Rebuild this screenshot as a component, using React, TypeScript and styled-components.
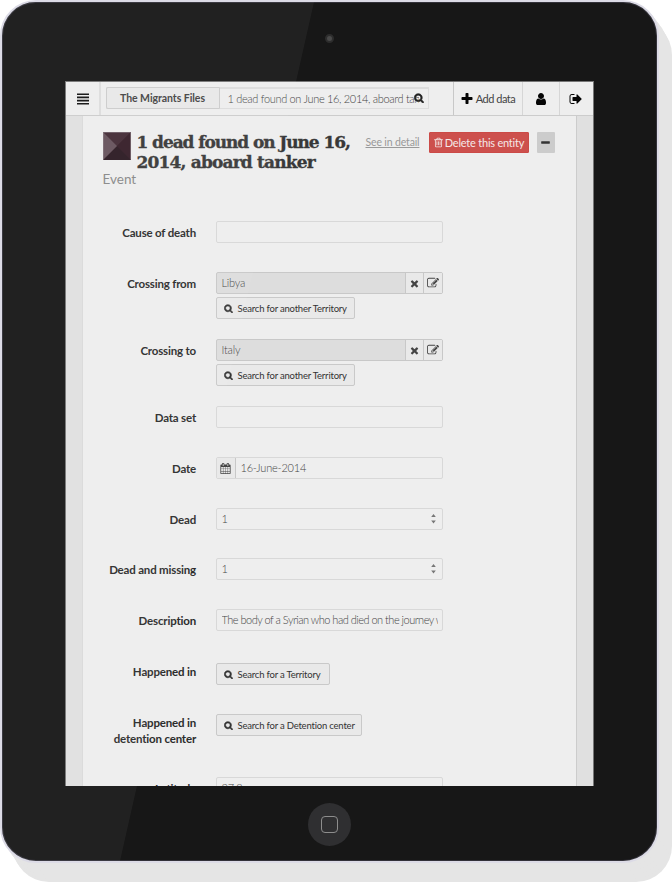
import React from 'react';
import styled, { createGlobalStyle } from 'styled-components';

const GlobalStyle = createGlobalStyle`
  * { box-sizing: border-box; }
  body { margin: 0; background: #fff; font-family: Lato, "Liberation Sans", sans-serif; color: #333; }
  button, input { font-family: inherit; margin: 0; }
`;

const paths = {
  search: 'M1216 832q0-185-131.5-316.5t-316.5-131.5-316.5 131.5-131.5 316.5 131.5 316.5 316.5 131.5 316.5-131.5 131.5-316.5zm512 832q0 52-38 90t-90 38q-54 0-90-38l-343-342q-179 124-399 124-143 0-273.5-55.5t-225-150-150-225-55.5-273.5 55.5-273.5 150-225 225-150 273.5-55.5 273.5 55.5 225 150 150 225 55.5 273.5q0 220-124 399l343 343q37 37 37 90z',
  user: 'M1536 1399q0 109-62.5 187t-150.5 78h-854q-88 0-150.5-78t-62.5-187q0-85 8.5-160.5t31.5-152 58.5-131 94-89 134.5-34.5q131 128 313 128t313-128q76 0 134.5 34.5t94 89 58.5 131 31.5 152 8.5 160.5zm-256-887q0 159-112.5 271.5t-271.5 112.5-271.5-112.5-112.5-271.5 112.5-271.5 271.5-112.5 271.5 112.5 112.5 271.5z',
  plus: 'M1600 736v192q0 40-28 68t-68 28h-416v416q0 40-28 68t-68 28h-192q-40 0-68-28t-28-68v-416h-416q-40 0-68-28t-28-68v-192q0-40 28-68t68-28h416v-416q0-40 28-68t68-28h192q40 0 68 28t28 68v416h416q40 0 68 28t28 68z',
  signOut: 'M704 1440q0 4 1 20t.5 26.5-3 23.5-10 19.5-20.5 6.5h-320q-119 0-203.5-84.5t-84.5-203.5v-704q0-119 84.5-203.5t203.5-84.5h320q13 0 22.5 9.5t9.5 22.5q0 4 1 20t.5 26.5-3 23.5-10 19.5-20.5 6.5h-320q-66 0-113 47t-47 113v704q0 66 47 113t113 47h312l11.5 1 11.5 3 8 5.5 7 9 2 13.5zm928-544q0 26-19 45l-544 544q-19 19-45 19t-45-19-19-45v-288h-448q-26 0-45-19t-19-45v-384q0-26 19-45t45-19h448v-288q0-26 19-45t45-19 45 19l544 544q19 19 19 45z',
  edit: 'M888 1184l116-116-152-152-116 116v56h96v96h56zm440-720q-16-16-33 1l-350 350q-17 17-1 33t33-1l350-350q17-17 1-33zm80 594v190q0 119-84.5 203.5t-203.5 84.5h-832q-119 0-203.5-84.5t-84.5-203.5v-832q0-119 84.5-203.5t203.5-84.5h832q63 0 117 25 15 7 18 23 3 17-9 29l-49 49q-14 14-32 8-23-6-45-6h-832q-66 0-113 47t-47 113v832q0 66 47 113t113 47h832q66 0 113-47t47-113v-126q0-13 9-22l64-64q15-15 35-7t20 29zm-96-738l288 288-672 672h-288v-288zm444 132l-92 92-288-288 92-92q28-28 68-28t68 28l152 152q28 28 28 68t-28 68z',
  times: 'M1490 1322q0 40-28 68l-136 136q-28 28-68 28t-68-28l-294-294-294 294q-28 28-68 28t-68-28l-136-136q-28-28-28-68t28-68l294-294-294-294q-28-28-28-68t28-68l136-136q28-28 68-28t68 28l294 294 294-294q28-28 68-28t68 28l136 136q28 28 28 68t-28 68l-294 294 294 294q28 28 28 68z',
  calendar: 'M192 1664h288v-288h-288v288zm352 0h320v-288h-320v288zm-352-352h288v-320h-288v320zm352 0h320v-320h-320v320zm-352-384h288v-288h-288v288zm736 736h320v-288h-320v288zm-384-736h320v-288h-320v288zm768 736h288v-288h-288v288zm-384-352h320v-320h-320v320zm-352-864v-288q0-13-9.5-22.5t-22.5-9.5h-64q-13 0-22.5 9.5t-9.5 22.5v288q0 13 9.5 22.5t22.5 9.5h64q13 0 22.5-9.5t9.5-22.5zm736 864h288v-320h-288v320zm-384-384h320v-288h-320v288zm384 0h288v-288h-288v288zm32-480v-288q0-13-9.5-22.5t-22.5-9.5h-64q-13 0-22.5 9.5t-9.5 22.5v288q0 13 9.5 22.5t22.5 9.5h64q13 0 22.5-9.5t9.5-22.5zm384-64v1280q0 52-38 90t-90 38h-1408q-52 0-90-38t-38-90v-1280q0-52 38-90t90-38h128v-96q0-66 47-113t113-47h64q66 0 113 47t47 113v96h384v-96q0-66 47-113t113-47h64q66 0 113 47t47 113v96h128q52 0 90 38t38 90z',
  trash: 'M704 736v576q0 14-9 23t-23 9h-64q-14 0-23-9t-9-23v-576q0-14 9-23t23-9h64q14 0 23 9t9 23zm256 0v576q0 14-9 23t-23 9h-64q-14 0-23-9t-9-23v-576q0-14 9-23t23-9h64q14 0 23 9t9 23zm256 0v576q0 14-9 23t-23 9h-64q-14 0-23-9t-9-23v-576q0-14 9-23t23-9h64q14 0 23 9t9 23zm128 724v-948h-896v948q0 22 7 40.5t14.5 27 10.5 8.5h832q3 0 10.5-8.5t14.5-27 7-40.5zm-672-1076h448l-48-117q-7-9-17-11h-317q-10 2-17 11zm928 32v64q0 14-9 23t-23 9h-96v948q0 83-47 143.5t-113 60.5h-832q-66 0-113-58.5t-47-141.5v-952h-96q-14 0-23-9t-9-23v-64q0-14 9-23t23-9h309l70-167q15-37 54-63t79-26h320q40 0 79 26t54 63l70 167h309q14 0 23 9t9 23z',
  bars: 'M0 60h1792v250H0zM0 535h1792v250H0zM0 1010h1792v250H0zM0 1485h1792v250H0z',
  minus: 'M256 700h1280q64 0 64 64v264q0 64-64 64H256q-64 0-64-64V764q0-64 64-64z',
};

function Icon({ name, size }: { name: keyof typeof paths; size: number }) {
  const bold = name === 'search' ? 130 : 0;
  return (
    <svg width={size} height={size} viewBox="0 0 1792 1792" fill="currentColor" stroke="currentColor" strokeWidth={bold} aria-hidden="true">
      <path d={paths[name]} />
    </svg>
  );
}

const Stage = styled.main`
  width: 672px;
  height: 882px;
  overflow: hidden;
`;

const Tablet = styled.div`
  position: relative;
  width: 659px;
  height: 863px;
  border: 2px solid #dcdbe6;
  border-radius: 36px;
  background: #171717;
  display: grid;
  grid-template-rows: 79px 705px 1fr;
  justify-items: center;
  box-shadow: inset 0 0 0 1px #33323a, 3px 4px #e5e5e5, 6px 8px #e5e5e5, 9px 12px #e5e5e5,
    11px 16px #e5e5e5, 13px 19px #e5e5e5;
`;

const Gloss = styled.div`
  position: absolute;
  inset: 0;
  border-radius: 34px;
  background: rgba(255, 255, 255, 0.048);
  clip-path: polygon(0 0, 312px 0, 118px 100%, 0 100%);
  pointer-events: none;
`;

const Camera = styled.div`
  width: 9px;
  height: 9px;
  margin-top: 32px;
  border: 2px solid #2d2d2d;
  border-radius: 50%;
  background: #4a4a4a;
`;

const HomeButton = styled.div`
  width: 43px;
  height: 43px;
  margin-top: 17px;
  border-radius: 50%;
  background: #2f2f31;
  display: grid;
  place-items: center;
  &::after {
    content: '';
    width: 15px;
    height: 15px;
    border: 1px solid #8d8d8d;
    border-radius: 4px;
  }
`;

const Screen = styled.div`
  width: 529px;
  height: 705px;
  margin-right: 1px;
  overflow: hidden;
  background: #e0e0e0;
  border: solid #777;
  border-width: 1px 1px 0;
  display: flex;
  flex-direction: column;
`;

const TopBar = styled.header`
  height: 34px;
  flex: none;
  display: flex;
  background: #eee;
  border-bottom: 1px solid #ccc;
`;

const BarCell = styled.div<{ $width: number; $edge?: string }>`
  width: ${(p) => p.$width}px;
  display: flex;
  align-items: center;
  justify-content: center;
  gap: 2px;
  color: #050505;
  border-left: 1px solid ${(p) => p.$edge ?? '#d6d6d6'};
`;

const MenuCell = styled.div`
  width: 35px;
  padding-left: 11px;
  display: flex;
  align-items: center;
  color: #111;
  border-right: 2px solid #ddd;
`;

const AddLabel = styled.span`
  font-size: 11px;
  line-height: 14px;
  color: #444;
  letter-spacing: -0.5px;
`;

const SearchGroup = styled.div`
  position: relative;
  width: 323px;
  height: 22px;
  margin: 5px 24px 0 5px;
  display: flex;
  border: 1px solid #ddd;
  border-top-width: 2px;
`;

const Project = styled.div`
  width: 114px;
  flex: none;
  margin: -2px 0 -1px -1px;
  display: grid;
  place-items: center;
  font-size: 10.5px;
  font-weight: 700;
  letter-spacing: -0.05px;
  color: #444;
  background: #e8e8e8;
  border: 1px solid #ccc;
  border-radius: 2px 0 0 2px;
`;

const Query = styled.div`
  flex: 1;
  padding-left: 8px;
  font-size: 11px;
  font-weight: 300;
  line-height: 19px;
  letter-spacing: -0.33px;
  color: #444;
  white-space: nowrap;
  overflow: hidden;
  span { display: block; width: 191px; overflow: hidden; }
`;

const SearchMark = styled.div`
  position: absolute;
  right: 4px;
  top: 4px;
  display: flex;
  color: #222;
`;

const Sheet = styled.section`
  width: 495px;
  flex: 1;
  min-height: 0;
  margin-left: 16px;
  overflow: hidden;
  background: #eee;
  border-left: 1px solid #dadada;
  border-right: 1px solid #ccc;
`;

const EntityHead = styled.div`
  height: 105px;
  padding: 16px 0 0 20px;
`;

const HeadRow = styled.div`
  display: flex;
  align-items: flex-start;
  height: 39px;
`;

const Title = styled.h1`
  width: 229px;
  margin: 0 0 0 6px;
  flex: none;
  font-family: "DejaVu Serif", serif;
  font-size: 17px;
  font-weight: 700;
  line-height: 20px;
  color: #383838;
  -webkit-text-stroke: 0.35px #383838;
  white-space: nowrap;
`;

const TitleLine = styled.span<{ $tracking: number }>`
  display: block;
  letter-spacing: ${(p) => p.$tracking}px;
`;

const DetailLink = styled.a`
  width: 63px;
  margin-top: 4px;
  font-size: 10.5px;
  line-height: 13px;
  letter-spacing: -0.15px;
  color: #999;
  text-decoration: underline;
  white-space: nowrap;
`;

const DeleteButton = styled.button`
  width: 100px;
  height: 21px;
  padding: 0;
  border: 1px solid #cb4a47;
  border-radius: 1px;
  background: #cd504d;
  color: #f4e8e8;
  display: flex;
  align-items: center;
  justify-content: center;
  gap: 1px;
  font-size: 11px;
  letter-spacing: -0.22px;
  white-space: nowrap;
`;

const CollapseButton = styled.button`
  width: 18px;
  height: 21px;
  margin-left: 8px;
  padding: 0;
  border: 0;
  border-radius: 1px;
  background: #ccc;
  color: #333;
  display: grid;
  place-items: center;
`;

const Kind = styled.div`
  font-size: 13.5px;
  line-height: 16px;
  color: #888;
`;

const Row = styled.div<{ $height: number }>`
  display: grid;
  grid-template-columns: 113px 227px;
  column-gap: 20px;
  align-items: start;
  height: ${(p) => p.$height}px;
`;

const Label = styled.label`
  padding-top: 4px;
  font-size: 11.5px;
  font-weight: 700;
  line-height: 16px;
  letter-spacing: -0.18px;
  margin-right: -0.5px;
  color: #2c2c2c;
  text-align: right;
  white-space: pre-line;
`;

const Field = styled.div<{ $filled?: boolean }>`
  height: 22px;
  display: flex;
  align-items: stretch;
  border: 1px solid ${(p) => (p.$filled ? '#c8c8c8' : '#d8d8d8')};
  border-radius: 2px;
  background: ${(p) => (p.$filled ? '#ddd' : '#eee')};
`;

const Value = styled.span<{ $tight?: boolean }>`
  flex: 1;
  min-width: 0;
  margin: 0 4px 0 5px;
  overflow: hidden;
  white-space: nowrap;
  font-size: 11px;
  font-weight: 300;
  line-height: 19px;
  letter-spacing: ${(p) => (p.$tight ? -0.51 : -0.2)}px;
  color: #444;
`;

const Addon = styled.span<{ $width: number; $side?: 'left' | 'right' }>`
  width: ${(p) => p.$width}px;
  display: grid;
  place-items: center;
  background: #e9e9e9;
  color: #444;
  border-${(p) => p.$side ?? 'left'}: 1px solid #c8c8c8;
`;

const SearchButton = styled.button<{ $width: number; $top: number }>`
  width: ${(p) => p.$width}px;
  height: 22px;
  margin-top: ${(p) => p.$top}px;
  padding: 0 0 0 7px;
  border: 1px solid #c9c9c9;
  border-radius: 2px;
  background: #e9e9e9;
  color: #333;
  display: flex;
  align-items: center;
  gap: 5px;
  font-size: 9.5px;
  letter-spacing: -0.2px;
  white-space: nowrap;
`;

const Stepper = styled.span`
  width: 5px;
  margin-right: 6px;
  color: #777;
  display: flex;
  align-items: center;
`;

type Item = {
  label: string;
  height: number;
  kind: 'text' | 'number' | 'date' | 'entity' | 'search';
  value?: string;
  search?: string;
  width?: number;
};

const items: Item[] = [
  { label: 'Cause of death', height: 51, kind: 'text' },
  { label: 'Crossing from', height: 67, kind: 'entity', value: 'Libya', search: 'Search for another Territory', width: 139 },
  { label: 'Crossing to', height: 67, kind: 'entity', value: 'Italy', search: 'Search for another Territory', width: 139 },
  { label: 'Data set', height: 51, kind: 'text' },
  { label: 'Date', height: 51, kind: 'date', value: '16-June-2014' },
  { label: 'Dead', height: 50, kind: 'number', value: '1' },
  { label: 'Dead and missing', height: 51, kind: 'number', value: '1' },
  { label: 'Description', height: 51, kind: 'text', value: 'The body of a Syrian who had died on the journey w' },
  { label: 'Happened in', height: 51, kind: 'search', search: 'Search for a Territory', width: 114 },
  { label: 'Happened in\ndetention center', height: 66, kind: 'search', search: 'Search for a Detention center', width: 146 },
  { label: 'Latitude', height: 51, kind: 'text', value: '37.2' },
];

function FormRow({ item }: { item: Item }) {
  return (
    <Row $height={item.height}>
      <Label>{item.label}</Label>
      <div>
        {item.kind !== 'search' && (
          <Field $filled={item.kind === 'entity'}>
            {item.kind === 'date' && <Addon $width={19} $side="right"><Icon name="calendar" size={11} /></Addon>}
            <Value $tight={(item.value ?? '').length > 20}>{item.value}</Value>
            {item.kind === 'number' && (
              <Stepper>
                <svg width="5" height="10" viewBox="0 0 5 10" fill="currentColor">
                  <path d="M2.5 0L4.8 3H.2zM.2 6.5h4.6L2.5 9.5z" />
                </svg>
              </Stepper>
            )}
            {item.kind === 'entity' && (
              <>
                <Addon $width={18}><Icon name="times" size={11} /></Addon>
                <Addon $width={19}><Icon name="edit" size={12} /></Addon>
              </>
            )}
          </Field>
        )}
        {item.search && (
          <SearchButton $width={item.width ?? 139} $top={3}>
            <Icon name="search" size={9} />
            {item.search}
          </SearchButton>
        )}
      </div>
    </Row>
  );
}

export default function App() {
  return (
    <Stage>
      <GlobalStyle />
      <Tablet>
        <Camera />
        <Screen>
          <TopBar>
            <MenuCell><Icon name="bars" size={12} /></MenuCell>
            <SearchGroup>
              <Project>The Migrants Files</Project>
              <Query><span>1 dead found on June 16, 2014, aboard tanker</span></Query>
              <SearchMark><Icon name="search" size={10} /></SearchMark>
            </SearchGroup>
            <BarCell $width={69} $edge="#c8c8c8">
              <Icon name="plus" size={14} />
              <AddLabel>Add data</AddLabel>
            </BarCell>
            <BarCell $width={37}><Icon name="user" size={14} /></BarCell>
            <BarCell $width={34}><Icon name="signOut" size={14} /></BarCell>
          </TopBar>
          <Sheet>
            <EntityHead>
              <HeadRow>
                <svg width="28" height="28" viewBox="0 0 28 28">
                  <path fill="#3a222c" d="M0 0h28v28H0z" />
                  <path fill="#432a35" d="M0 0h28L14 14z" />
                  <path fill="#351d27" d="M28 0v28L14 14z" />
                  <path fill="#2c1a22" d="M28 28H0l14-14z" />
                  <path fill="#66525c" d="M0 28V0l14 14z" />
                  <path fill="none" stroke="#8d8086" strokeWidth=".7" d="M.3 27.7V.3h27.4v27.4" />
                </svg>
                <Title>
                  <TitleLine $tracking={-1.08}>1 dead found on June 16,</TitleLine>
                  <TitleLine $tracking={-0.82}>2014, aboard tanker</TitleLine>
                </Title>
                <DetailLink>See in detail</DetailLink>
                <DeleteButton><Icon name="trash" size={11} />Delete this entity</DeleteButton>
                <CollapseButton><Icon name="minus" size={11} /></CollapseButton>
              </HeadRow>
              <Kind>Event</Kind>
            </EntityHead>
            {items.map((item) => <FormRow key={item.label} item={item} />)}
          </Sheet>
        </Screen>
        <HomeButton />
        <Gloss />
      </Tablet>
    </Stage>
  );
}
